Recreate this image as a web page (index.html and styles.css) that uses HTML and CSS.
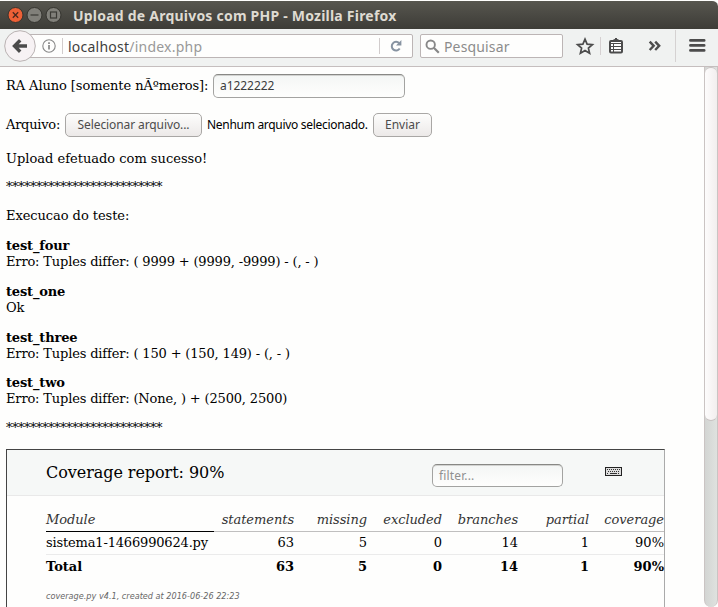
FILE: index.html
```html
<!DOCTYPE html>
<html lang="pt-BR">
<head>
<meta charset="utf-8">
<title>Upload de Arquivos com PHP</title>
<link rel="stylesheet" href="styles.css">
</head>
<body>
<div class="window">
  <header class="titlebar">
    <svg class="controls" width="60" height="18" viewBox="0 0 60 18">
      <circle cx="9.5" cy="9" r="7.5" fill="#ee6036" stroke="#35332e"/>
      <path d="M6.8 6.3l5.4 5.4M12.2 6.3l-5.4 5.4" stroke="#49281e" stroke-width="1.3"/>
      <circle cx="28.5" cy="9" r="7.5" fill="#81807a" stroke="#35342f"/>
      <path d="M24.5 9h8" stroke="#3b3a35" stroke-width="1.2"/>
      <circle cx="47.5" cy="9" r="7.5" fill="#81807a" stroke="#35342f"/>
      <rect x="44.5" y="6" width="6" height="6" fill="none" stroke="#3b3a35" stroke-width="1.2"/>
    </svg>
    <span class="title">Upload de Arquivos com PHP - Mozilla Firefox</span>
  </header>
  <nav class="toolbar">
    <span class="back"><svg width="32" height="32" viewBox="0 0 32 32"><circle cx="16" cy="16" r="15.3" fill="#f7f2f4" stroke="#b9b2b2"/><path d="M16.2 10.2l-5.7 5.8 5.7 5.8M11.5 16H23" fill="none" stroke="#4b4b4b" stroke-width="3.4"/></svg></span>
    <div class="urlbar">
      <svg width="14" height="14" viewBox="0 0 14 14"><circle cx="7" cy="7" r="6.2" fill="none" stroke="#888" stroke-width="1.1"/><path d="M7 6v4.5M7 3.3v1.6" stroke="#777" stroke-width="1.5"/></svg>
      <i class="sep"></i>
      <span class="url">localhost<span class="path">/index.php</span></span>
      <i class="sep reload-sep"></i>
      <svg width="12" height="12" viewBox="0 0 12 12"><path d="M9.2 3.2A4.3 4.3 0 1 0 9.7 8.500" fill="none" stroke="#8793a1" stroke-width="2"/><path d="M11.4 0v5.5H6z" fill="#8793a1"/></svg>
    </div>
    <div class="search">
      <svg width="15" height="15" viewBox="0 0 15 15"><circle cx="5.7" cy="5.7" r="4.2" fill="none" stroke="#888" stroke-width="1.9"/><path d="M8.8 8.8l5 5" stroke="#888" stroke-width="2.2"/></svg>
      <span class="search-text">Pesquisar</span>
    </div>
    <svg class="tools" width="155" height="38" viewBox="0 0 155 38">
      <path d="M22 10.2l2.1 5 5.3.4-4 3.5 1.2 5.2-4.6-2.8-4.6 2.8 1.2-5.2-4-3.5 5.3-.4z" fill="none" stroke="#4c4c4c" stroke-width="1.7"/>
      <path d="M37.5 8v18" stroke="#d5d0d1"/>
      <rect x="47" y="12" width="12" height="11.500" rx="1" fill="#fff" stroke="#4c4c4c" stroke-width="2"/>
      <path d="M49 12l2.500-1.500L53 9l1.500 1.500L57 12z" fill="#4c4c4c" stroke="#4c4c4c"/>
      <path d="M48 14.500h10M48 17.500h10M48 20.500h10" stroke="#4c4c4c"/><path d="M50.500 14v9" stroke="#4c4c4c"/>
      <path d="M86.700 12.600l4 4.200-4 4.200M92.200 12.600l4 4.200-4 4.200" fill="none" stroke="#4c4c4c" stroke-width="2.400"/>
      <path d="M112.500 1v32" stroke="#d5d2d2"/>
      <path d="M127.500 11.400h13.600M127.500 16.400h13.600M127.500 21.400h13.600" stroke="#4c4c4c" stroke-width="2.900" stroke-linecap="round"/>
    </svg>
  </nav>
  <div class="viewport">
    <main class="page">
      <div class="row"><span class="label-ra">RA Aluno [somente nÃºmeros]:</span><span class="field ra">a1222222</span></div>
      <div class="row file-row"><span class="label-file">Arquivo:</span><span class="button pick"><span>Selecionar arquivo...</span></span><span class="nofile">Nenhum arquivo selecionado.</span><span class="button send"><span>Enviar</span></span></div>
      <p class="done">Upload efetuado com sucesso!</p>
      <p class="stars">**************************</p>
      <p class="exec">Execucao do teste:</p>
      <p class="test"><b>test_four</b><br>Erro: Tuples differ: ( 9999 + (9999, -9999) - (, - )</p>
      <p class="test"><b>test_one</b><br>Ok</p>
      <p class="test"><b>test_three</b><br>Erro: Tuples differ: ( 150 + (150, 149) - (, - )</p>
      <p class="test last"><b>test_two</b><br>Erro: Tuples differ: (None, ) + (2500, 2500)</p>
      <p class="stars">**************************</p>
      <section class="report">
        <div class="report-head">
          <h1>Coverage report: 90%</h1>
          <span class="field filter">filter...</span>
          <svg class="keyboard" width="17" height="9" viewBox="0 0 17 9"><rect x=".5" y=".5" width="16" height="8" fill="#ddd" stroke="#222"/><path d="M2 2.500h13M2 6.500h2M13 6.500h2" stroke="#333" stroke-dasharray="1 1"/><path d="M3 4.500h12" stroke="#333" stroke-dasharray="1 1"/><path d="M5 6.500h7" stroke="#333"/></svg>
        </div>
        <table>
          <colgroup><col class="c1"><col class="c2"><col class="c3"><col class="c4"><col class="c5"><col class="c6"><col class="c7"></colgroup>
          <thead><tr><th>Module</th><th>statements</th><th>missing</th><th>excluded</th><th>branches</th><th>partial</th><th>coverage</th></tr></thead>
          <tbody><tr><td>sistema1-1466990624.py</td><td>63</td><td>5</td><td>0</td><td>14</td><td>1</td><td>90%</td></tr></tbody>
          <tfoot><tr><td>Total</td><td>63</td><td>5</td><td>0</td><td>14</td><td>1</td><td>90%</td></tr></tfoot>
        </table>
        <p class="credit">coverage.py v4.1, created at 2016-06-26 22:23</p>
      </section>
    </main>
    <div class="scrollbar"><div class="thumb"></div></div>
  </div>
</div>
</body>
</html>
```
FILE: styles.css
```css
* { box-sizing: border-box; }
body { margin: 0; background: #fefefd; overflow: hidden; }
p, h1 { margin: 0; }
svg { flex: none; display: block; }
.window { width: 718px; height: 607px; display: flex; flex-direction: column; font: 13px/16px "DejaVu Serif", serif; color: #000; }
.titlebar { flex: none; height: 29px; border-top: 1px solid #fefefd; background: linear-gradient(#57564f, #3d3c37); border-radius: 0 6px 0 0; display: flex; align-items: center; padding-left: 6px; }
.title { margin-left: 7px; padding-top: 1px; font: bold 14px/18px "Noto Sans", sans-serif; letter-spacing: .22px; color: #dfdbd2; white-space: nowrap; }
.toolbar { flex: none; height: 38px; background: #f0f2f1; border-bottom: 1px solid #c5bebe; display: flex; align-items: flex-start; padding-left: 4px; }
.back { z-index: 1; margin-top: 1px; }
.urlbar { height: 24px; width: 390px; margin: 5px 0 0 -13px; border: 1px solid #bcb5b5; border-radius: 2px; background: #fefefd; display: flex; align-items: center; padding-left: 18px; }
.sep { width: 1px; height: 16px; background: #d1cccc; margin: 0 5px 0 6px; }
.reload-sep { margin: 0 10px 0 auto; }
.urlbar svg:last-child { margin-right: 10px; }
.url, .search-text { font: 14px/20px "Noto Sans", sans-serif; letter-spacing: .23px; color: #3e3e3e; white-space: nowrap; padding-top: 1px; }
.path { color: #999; }
.search { height: 24px; width: 143px; margin: 5px 0 0 7px; border: 1px solid #bcb5b5; border-radius: 2px; background: #fefefd; display: flex; align-items: center; padding-left: 4px; }
.search-text { margin-left: 4px; letter-spacing: .15px; color: #8c8c8c; }
.viewport { flex: 1; min-height: 0; display: flex; }
.page { flex: 1; padding: 7px 0 0 6px; white-space: nowrap; overflow: hidden; }
.row { height: 24px; display: flex; align-items: center; }
.label-ra { width: 207px; letter-spacing: -.08px; }
.field { border: 1px solid #a3a3a1; border-top-color: #888885; box-shadow: inset 0 1px 0 #d2d3d1; border-radius: 5px; background: linear-gradient(#f4f6f5, #fefefd); font: 12px/21px "Noto Sans", sans-serif; color: #3c3c3c; padding-left: 6px; }
.ra { width: 192px; height: 24px; line-height: 22px; letter-spacing: -.06px; }
.file-row { margin-top: 15px; }
.label-file { width: 59px; letter-spacing: -.25px; }
.button { height: 24px; border: 1px solid #a9a7a5; border-radius: 5px; background: linear-gradient(#fdfdfc, #ece9e8); display: flex; align-items: center; justify-content: center; font: 12px/20px "Noto Sans", sans-serif; color: #4c4c4c; }
.pick { width: 137px; letter-spacing: -.1px; }
.nofile { width: 166px; margin-left: 5px; font: 12px/20px "Noto Sans", sans-serif; letter-spacing: -.3px; }
.send { width: 59px; }
.done { margin-top: 14px; }
.stars { margin-top: 12px; height: 16px; letter-spacing: -.5px; }
.exec { margin-top: 13px; letter-spacing: -.06px; }
.test { margin-top: 14px; letter-spacing: -.16px; }
.test b { letter-spacing: -.16px; }
.last { margin-top: 13px; }
.last + .stars { margin-top: 13px; }
.report { margin-top: 13px; width: 659px; height: 170px; border: 1px solid #aaa; border-top-color: #444; border-left-color: #444; }
.report-head { height: 46px; padding-left: 39px; background: #f6f8f7; border-bottom: 1px solid #e9e9e9; display: flex; align-items: flex-start; }
h1 { width: 386px; margin-top: 13px; font-size: 16px; font-weight: normal; line-height: 20px; letter-spacing: -.06px; }
.filter { width: 131px; height: 23px; margin-top: 14px; color: #909090; letter-spacing: .15px; }
.keyboard { margin: 17px 0 0 42px; }
table { width: 618px; margin: 12px 0 0 39px; table-layout: fixed; border-collapse: separate; border-spacing: 0; }
.c1 { width: 168px; } .c2 { width: 80px; } .c3 { width: 73px; } .c4 { width: 75px; } .c5 { width: 76px; } .c6 { width: 71px; } .c7 { width: 75px; }
th, td { padding: 0; height: 23px; text-align: right; }
th { height: 24px; font-weight: normal; font-style: italic; color: #333; border-bottom: 1px solid #c0bfbf; letter-spacing: -.06px; }
th:first-child { border-bottom-color: #000; }
th:first-child, td:first-child { text-align: left; }
tbody td:first-child { letter-spacing: -.17px; }
tbody td { border-bottom: 1px solid #ebebeb; }
tfoot td { height: 24px; font-weight: bold; }
.credit { margin: 10px 0 0 39px; font: italic 9px/14px "DejaVu Sans Condensed", "DejaVu Sans", sans-serif; letter-spacing: .02px; color: #666; }
.scrollbar { flex: none; width: 14px; border: solid #cac4c3; border-width: 0 1px; background: linear-gradient(90deg, #d3d5d3, #dfe2df); border-radius: 0 0 7px 7px; }
.thumb { height: 354px; border: 1px solid #c8c1c1; border-width: 1px 0; border-radius: 7px; background: linear-gradient(90deg, #fdfcfc, #f2eeee); }
```
